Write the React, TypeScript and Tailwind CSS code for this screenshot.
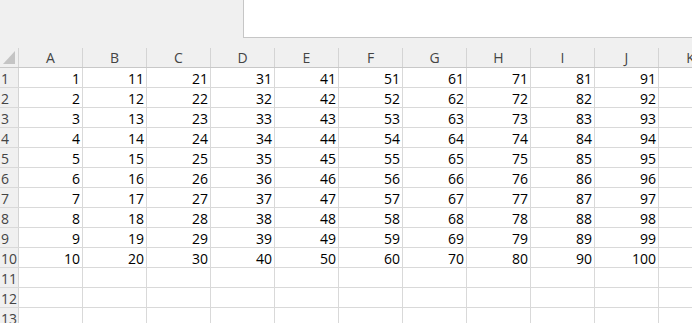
const cols = ["A", "B", "C", "D", "E", "F", "G", "H", "I", "J", "K"];
const rows = Array.from({ length: 13 }, (_, i) => i + 1);

export default function App() {
  return (
    <div
      className="h-[323px] w-[692px] overflow-hidden bg-white text-[14px]"
      style={{ fontFamily: '"Open Sans", "Liberation Sans", sans-serif' }}
    >
      <div className="flex h-[48px] bg-[#f0f0f0]">
        <div className="w-[243px]" />
        <div className="h-[38px] flex-1 border-b border-l border-[#c6c6c6] bg-white" />
      </div>

      <div className="flex h-[20px] border-b border-[#c8c8c8] bg-[#f0f0f0] text-[#444]">
        <div className="relative w-[19px] shrink-0 border-r border-[#d4d4d4]">
          <svg className="absolute left-[3px] top-[3px]" width="12" height="13" viewBox="0 0 12 13">
            <polygon points="12,0 12,13 0,13" fill="#c4c4c4" />
          </svg>
        </div>
        {cols.map((c) => (
          <div
            key={c}
            className="flex w-[64px] shrink-0 items-center justify-center border-r border-[#d4d4d4] leading-none"
          >
            {c}
          </div>
        ))}
      </div>

      {rows.map((r) => (
        <div key={r} className="flex h-[20px] border-b border-[#d9d9d9]">
          <div className="flex w-[19px] shrink-0 items-end border-r border-[#d4d4d4] bg-[#f0f0f0] pb-[1px] pl-[1px] leading-none text-[#444]">
            {r}
          </div>
          {cols.map((c, ci) => (
            <div
              key={c}
              className="flex w-[64px] shrink-0 items-end justify-end border-r border-[#d9d9d9] pb-[1px] pr-[2px] leading-none text-black"
            >
              {r <= 10 && ci < 10 ? ci * 10 + r : ""}
            </div>
          ))}
        </div>
      ))}
    </div>
  );
}
